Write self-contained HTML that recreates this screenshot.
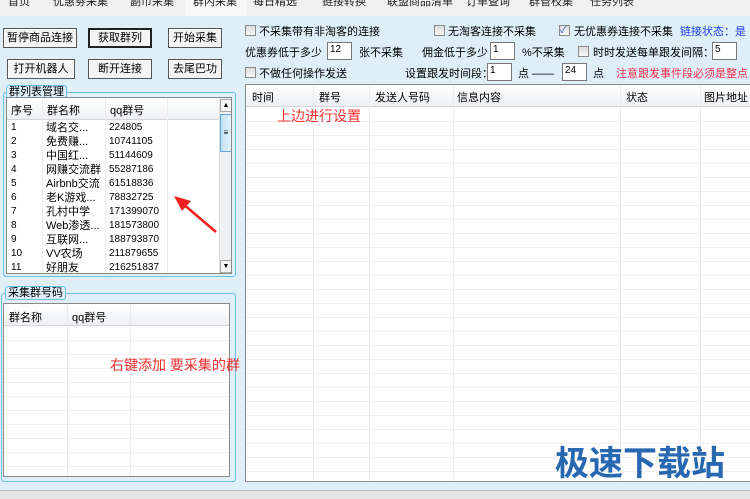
<!DOCTYPE html>
<html><head><meta charset="utf-8"><style>
*{margin:0;padding:0;box-sizing:border-box}
body{width:750px;height:499px;overflow:hidden;background:#dfeff8;font-family:"Liberation Sans","Noto Sans CJK SC",sans-serif;font-size:11px;color:#000;position:relative}
.a{position:absolute;white-space:nowrap}
.tabs{position:absolute;left:0;top:0;width:750px;height:16px;background:#f0f0f0;overflow:hidden}
.tabs span{position:absolute;top:-7px;font-size:11px;color:#222}
.btn{position:absolute;height:20px;border:1px solid #555;background:#f4f4f4;text-align:center;line-height:18px;font-size:11px;box-shadow:inset 1px 1px #fff}
.cb{position:absolute;width:11px;height:11px;border:1px solid #8a8a8a;background:linear-gradient(#ddd,#f8f8f8)}
.in{position:absolute;height:18px;border:1px solid #777;background:#fff;font-size:10px;padding-left:2px;line-height:14px}
.grp{position:absolute;border:1px solid #6cc0e4;border-radius:3px}
.lbl{position:absolute;background:#dfeff8;border:1px solid #6cc0e4;border-radius:3px;padding:0 2px;line-height:12px;font-size:11px}
.list{position:absolute;background:#fff;border:1px solid #8a8a8a;overflow:hidden}
.hdr{position:absolute;left:0;top:0;right:0;height:22px;background:linear-gradient(#fff,#eef0f3);border-bottom:1px solid #d5d5d5}
.vl{position:absolute;top:0;bottom:0;width:1px;background:#ececec}
.red{color:#f03030;font-size:14px}
</style></head><body>
<div class="tabs">
<div style="position:absolute;left:185px;top:0;width:62px;height:16px;background:#f8f8f8"></div>
<span style="left:8px">首页</span><span style="left:53px">优惠劵采集</span><span style="left:130px">副币采集</span><span style="left:193px">群内采集</span><span style="left:253px">每日精选</span><span style="left:322px">链接转换</span><span style="left:387px">联盟商品清单</span><span style="left:466px">订单查询</span><span style="left:529px">群管校集</span><span style="left:590px">任务列表</span>
</div>

<div class="btn" style="left:3px;top:28px;width:74px">暂停商品连接</div>
<div class="btn" style="left:88px;top:28px;width:64px;border:2px solid #222;line-height:16px">获取群列</div>
<div class="btn" style="left:168px;top:28px;width:54px">开始采集</div>
<div class="btn" style="left:7px;top:59px;width:68px">打开机器人</div>
<div class="btn" style="left:88px;top:59px;width:64px">断开连接</div>
<div class="btn" style="left:168px;top:59px;width:54px">去尾巴功</div>

<div class="cb" style="left:245px;top:25px"></div><div class="a" style="left:259px;top:23px">不采集带有非淘客的连接</div>
<div class="cb" style="left:434px;top:25px"></div><div class="a" style="left:448px;top:23px">无淘客连接不采集</div>
<div class="cb" style="left:559px;top:25px;font-size:10px;line-height:9px;color:#2a5db0">✓</div><div class="a" style="left:574px;top:23px">无优惠券连接不采集</div>
<div class="a" style="left:680px;top:23px;color:#1c3cf0">链接状态：是</div>
<div class="a" style="left:245px;top:44px">优惠券低于多少</div><div class="in" style="left:327px;top:42px;width:25px">12</div><div class="a" style="left:359px;top:44px">张不采集</div>
<div class="a" style="left:422px;top:44px">佣金低于多少</div><div class="in" style="left:490px;top:42px;width:25px">1</div><div class="a" style="left:522px;top:44px">%不采集</div>
<div class="cb" style="left:578px;top:46px"></div><div class="a" style="left:593px;top:44px">时时发送每单跟发间隔：</div><div class="in" style="left:712px;top:42px;width:25px">5</div>
<div class="cb" style="left:245px;top:67px"></div><div class="a" style="left:259px;top:65px">不做任何操作发送</div>
<div class="a" style="left:405px;top:65px">设置跟发时间段：</div><div class="in" style="left:487px;top:63px;width:25px">1</div><div class="a" style="left:518px;top:65px">点 ——</div><div class="in" style="left:562px;top:63px;width:25px">24</div><div class="a" style="left:593px;top:65px">点</div>
<div class="a" style="left:616px;top:65px;color:#f0304a">注意跟发事件段必须是整点</div>

<div class="list" style="left:245px;top:84px;width:510px;height:398px">
<div class="hdr"></div>
<div style="position:absolute;left:0;right:0;top:23px;bottom:0;background:repeating-linear-gradient(#fff 0 13px,#efefef 13px 14px)"></div>
<div class="vl" style="left:67px"></div><div class="vl" style="left:123px"></div><div class="vl" style="left:207px"></div><div class="vl" style="left:374px"></div><div class="vl" style="left:454px"></div>
<div class="a" style="left:6px;top:4px">时间</div><div class="a" style="left:73px;top:4px">群号</div><div class="a" style="left:129px;top:4px">发送人号码</div><div class="a" style="left:211px;top:4px">信息内容</div><div class="a" style="left:380px;top:4px">状态</div><div class="a" style="left:458px;top:4px">图片地址</div>
<div class="a red" style="left:31px;top:21px">上边进行设置</div>
</div>

<div class="grp" style="left:3px;top:92px;width:233px;height:185px"></div>
<div class="lbl" style="left:6px;top:85px">群列表管理</div>
<div class="list" style="left:6px;top:97px;width:226px;height:177px">
<div class="hdr"></div>
<div class="vl" style="left:35px"></div><div class="vl" style="left:98px"></div><div class="vl" style="left:160px"></div>
<div class="a" style="left:4px;top:4px">序号</div><div class="a" style="left:40px;top:4px">群名称</div><div class="a" style="left:103px;top:4px">qq群号</div>
<div style="position:absolute;left:0;top:23px;font-size:10px;line-height:14px">
<div style="position:absolute;left:4px;width:200px">1<br>2<br>3<br>4<br>5<br>6<br>7<br>8<br>9<br>10<br>11</div>
<div style="position:absolute;left:39px;width:70px;font-size:11px">域名交...<br>免费赚...<br>中国红...<br>网赚交流群<br>Airbnb交流<br>老K游戏...<br>孔村中学<br>Web渗透...<br>互联网...<br>VV农场<br>好朋友</div>
<div style="position:absolute;left:102px;width:70px">224805<br>10741105<br>51144609<br>55287186<br>61518836<br>78832725<br>171399070<br>181573800<br>188793870<br>211879655<br>216251837</div>
</div>
<div style="position:absolute;left:212px;top:0;width:13px;height:176px;background:#eef0f2;border-left:1px solid #ddd">
<div style="position:absolute;left:0;top:1px;width:12px;height:13px;border:1px solid #aaa;background:#f4f4f4;font-size:7px;text-align:center;line-height:11px">▲</div>
<div style="position:absolute;left:0;top:16px;width:12px;height:38px;border:1px solid #6aa8d8;background:linear-gradient(90deg,#bfe0f6,#e2f2fc);font-size:8px;text-align:center;line-height:36px">≡</div>
<div style="position:absolute;left:0;bottom:1px;width:12px;height:13px;border:1px solid #aaa;background:#f4f4f4;font-size:7px;text-align:center;line-height:11px">▼</div>
</div>
</div>
<svg class="a" style="left:170px;top:192px" width="50" height="44"><line x1="46" y1="40" x2="12" y2="11" stroke="#f02020" stroke-width="2.5"/><polygon points="4,4 21,9 12,19" fill="#f02020"/></svg>

<div class="grp" style="left:1px;top:293px;width:235px;height:189px"></div>
<div class="lbl" style="left:5px;top:286px">采集群号码</div>
<div class="list" style="left:3px;top:303px;width:227px;height:174px">
<div class="hdr"></div>
<div style="position:absolute;left:0;right:0;top:23px;bottom:0;background:repeating-linear-gradient(#fff 0 13px,#efefef 13px 14px)"></div>
<div class="vl" style="left:63px"></div><div class="vl" style="left:126px"></div>
<div class="a" style="left:5px;top:5px">群名称</div><div class="a" style="left:68px;top:5px">qq群号</div>
</div>
<div class="a red" style="left:110px;top:355px">右键添加 要采集的群</div>

<div style="position:absolute;left:0;top:490px;width:750px;height:9px;background:#e4e4e4;border-top:1px solid #bbb"></div>
<div class="a" style="left:555px;top:436px;font-size:34px;font-weight:bold;color:#2868b0">极速下载站</div>
</body></html>
